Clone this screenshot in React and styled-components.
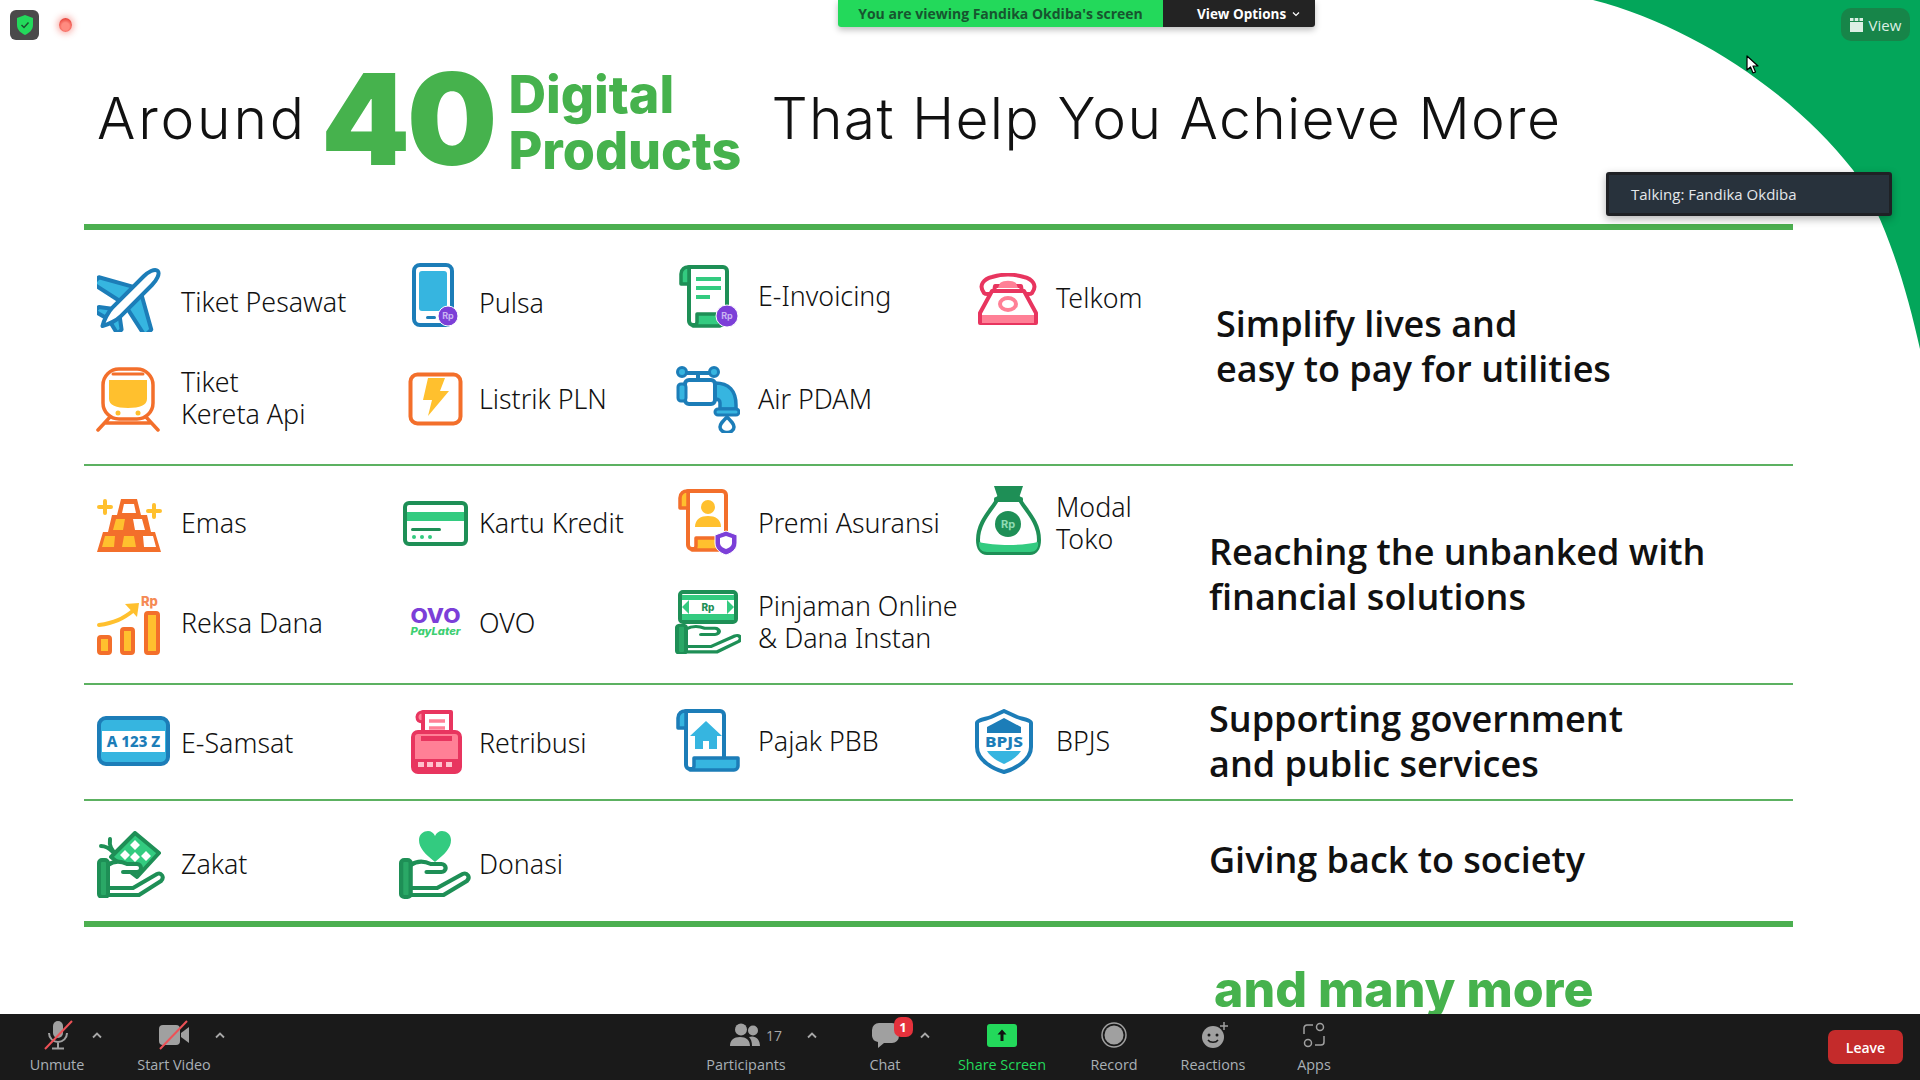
import styled, { createGlobalStyle } from "styled-components";

const BLUE = "#1c7db8";
const SKY = "#36b5e0";
const ORANGE = "#f36f2b";
const YELLOW = "#ffc02e";
const GREEN = "#1e8f56";
const MINT = "#33cb80";
const RED = "#e8355f";
const PINK = "#ff8096";
const PURPLE = "#7c3fd8";

const GlobalStyle = createGlobalStyle`
  html, body { margin: 0; padding: 0; background: #fff; }
  body { width: 1920px; height: 1080px; overflow: hidden; font-family: "Open Sans", sans-serif; }
`;

const Page = styled.div`
  position: relative;
  width: 1920px;
  height: 1080px;
  overflow: hidden;
  background: #fff;
`;

const Slide = styled.main`
  height: 1014px;
  display: flex;
  flex-direction: column;
`;

const Corner = styled.svg`
  position: absolute;
  top: 0;
  left: 0;
  pointer-events: none;
`;

const Header = styled.header`
  position: relative;
  height: 224px;
  padding: 22px 0 0 97px;
  box-sizing: border-box;
  display: flex;
  align-items: center;
  font-family: Inter, sans-serif;
`;

const Thin = styled.span`
  font-size: 57px;
  font-weight: 300;
  color: #111;
  letter-spacing: ${({ $ls }) => $ls}px;
  line-height: 64px;
  margin-top: -8px;
`;

const Big = styled.span`
  font-size: 127px;
  font-weight: 900;
  color: #46b24d;
  letter-spacing: -3px;
  line-height: 124px;
  margin: -8px 0 0 14px;
`;

const Stacked = styled.span`
  font-size: 52px;
  font-weight: 800;
  color: #46b24d;
  line-height: 56px;
  margin: 0 30px 0 14px;
`;

const Rule = styled.div`
  flex: none;
  width: 1709px;
  margin-left: 84px;
  height: ${({ $h }) => $h}px;
  background: ${({ $h }) => ($h > 3 ? "#4caf50" : "#5cb161")};
  position: relative;
`;

const Section = styled.section`
  flex: none;
  height: ${({ $h }) => $h}px;
  display: flex;
  padding-left: 96px;
  box-sizing: border-box;
`;

const ItemGrid = styled.div`
  width: 1113px;
  flex: none;
  box-sizing: border-box;
  padding-top: ${({ $top }) => $top}px;
  display: grid;
  grid-template-columns: 298px 279px 298px 238px;
  grid-auto-rows: ${({ $row }) => $row || 100}px;
  align-content: start;
`;

const Item = styled.div`
  display: flex;
  align-items: center;
  grid-row: ${({ $r }) => $r};
  grid-column: ${({ $c }) => $c};
`;

const IconSlot = styled.div`
  width: 85px;
  flex: none;
  display: flex;
  align-items: center;
  padding-left: ${({ $x }) => $x}px;
  box-sizing: border-box;
  margin-top: ${({ $iy }) => $iy * 2}px;
  svg { display: block; flex: none; }
`;

const Label = styled.div`
  font-family: "Noto Sans", sans-serif;
  font-size: 26.8px;
  font-weight: 300;
  line-height: 32px;
  color: #111;
  white-space: pre-line;
  margin-top: ${({ $y }) => $y * 2}px;
`;

const Tagline = styled.h2`
  margin: ${({ $top }) => $top}px 0 0 ${({ $x }) => $x}px;
  font-family: "Open Sans", sans-serif;
  font-size: 36px;
  font-weight: 600;
  line-height: 45px;
  color: #111;
  white-space: pre-line;
  align-self: flex-start;
`;

const More = styled.div`
  flex: none;
  height: 87px;
  box-sizing: border-box;
  padding: 36px 0 0 1214px;
  font-family: Inter, sans-serif;
  font-size: 50px;
  font-weight: 800;
  line-height: 52px;
  color: #46b24d;
  overflow: hidden;
  white-space: nowrap;
`;

const Shield = styled.div`
  position: absolute;
  left: 10px;
  top: 10px;
  width: 29px;
  height: 30px;
  border-radius: 6px;
  background: #4a4a4a;
  display: flex;
  align-items: center;
  justify-content: center;
`;

const RecDot = styled.div`
  position: absolute;
  left: 59px;
  top: 18px;
  width: 13px;
  height: 14px;
  border-radius: 50%;
  background: radial-gradient(circle at 50% 60%, #ff8b80 0 35%, #e8453c 75%);
  box-shadow: 0 0 6px 2px rgba(240, 90, 80, 0.45);
`;

const Banner = styled.div`
  position: absolute;
  top: 0;
  left: 838px;
  height: 27px;
  display: flex;
  font-size: 14px;
  font-weight: 700;
  box-shadow: 0 3px 6px rgba(0, 0, 0, 0.25);
  border-radius: 0 0 3px 3px;
  overflow: hidden;
`;

const BannerText = styled.div`
  width: 325px;
  background: #23d95b;
  color: #17552f;
  display: flex;
  align-items: center;
  justify-content: center;
`;

const BannerOptions = styled.div`
  width: 152px;
  background: #232323;
  color: #fff;
  display: flex;
  align-items: center;
  padding-left: 34px;
  box-sizing: border-box;
  gap: 6px;
  font-size: 13.5px;
`;

const ViewPill = styled.div`
  position: absolute;
  left: 1841px;
  top: 8px;
  width: 69px;
  height: 33px;
  border-radius: 10px;
  background: #178549;
  color: #dcefe4;
  font-size: 15px;
  display: flex;
  align-items: center;
  justify-content: center;
  gap: 6px;
`;

const Talking = styled.div`
  position: absolute;
  left: 1606px;
  top: 172px;
  width: 286px;
  height: 44px;
  box-sizing: border-box;
  background: #28323c;
  border: 3px solid #1f2125;
  border-radius: 3px;
  box-shadow: 0 3px 8px rgba(0, 0, 0, 0.3);
  color: #e4e7ea;
  font-size: 15px;
  display: flex;
  align-items: center;
  padding-left: 22px;
`;

const Cursor = styled.svg`
  position: absolute;
  left: 1746px;
  top: 55px;
`;

const Toolbar = styled.footer`
  height: 66px;
  background: #1a1a1a;
  display: flex;
  align-items: flex-start;
  font-family: "Open Sans", sans-serif;
`;

const ToolButton = styled.div`
  flex: none;
  width: ${({ $w }) => $w}px;
  margin-left: ${({ $ml }) => $ml || 0}px;
  display: flex;
  flex-direction: column;
  align-items: center;
  position: relative;
`;

const ToolIcon = styled.div`
  height: 42px;
  display: flex;
  align-items: center;
  justify-content: center;
  gap: 6px;
  position: relative;
  color: #a8a8a8;
  font-size: 14px;
  padding-left: ${({ $pad }) => $pad || 0}px;
`;

const ToolLabel = styled.div`
  font-size: 14.4px;
  line-height: 18px;
  white-space: nowrap;
  color: ${({ $on }) => ($on ? "#23d95b" : "#a9b0b6")};
`;

const Caret = styled.svg`
  flex: none;
  width: 20px;
  height: 10px;
  margin: 16px 0 0 ${({ $ml }) => $ml || 0}px;
`;

const Badge = styled.span`
  position: absolute;
  top: 3px;
  left: 22px;
  width: 19px;
  height: 20px;
  border-radius: 7px;
  background: #e5323c;
  color: #fff;
  font-size: 13px;
  font-weight: 700;
  display: flex;
  align-items: center;
  justify-content: center;
`;

const ShareTile = styled.div`
  width: 30px;
  height: 23px;
  border-radius: 3px;
  background: #23d95b;
  display: flex;
  align-items: center;
  justify-content: center;
`;

const Leave = styled.div`
  margin: 16px 17px 0 auto;
  width: 75px;
  height: 34px;
  border-radius: 7px;
  background: #c42b2b;
  color: #fff;
  font-size: 14px;
  font-weight: 600;
  display: flex;
  align-items: center;
  justify-content: center;
`;

function RpBadge({ x, y, r = 9.5 }) {
  return (
    <g>
      <circle cx={x} cy={y} r={r} fill={PURPLE} stroke="#fff" strokeWidth="1" />
      <text x={x} y={y + 3.2} fontSize="9" fontWeight="700" fontFamily="Inter, sans-serif" fill="#c9b3f2" textAnchor="middle">Rp</text>
    </g>
  );
}

function HandShape({ y = 0, sy = 1 }) {
  return (
    <g transform={`translate(0 ${y}) scale(1 ${sy})`} fill="none" stroke={GREEN} strokeWidth="4" strokeLinejoin="round" strokeLinecap="round">
      <path d="M11 8C18 3 24 4 30 7H40a4 4 0 0 1 0 8H26" fill="#fff" />
      <path d="M11 31H36L60 17c4-2 8 3 4 7L42 38H11" fill="#fff" />
      <rect x="2" y="3" width="9" height="37" rx="3" fill="#2aa866" />
    </g>
  );
}

function ScrollDoc({ stroke, fill, wide }) {
  return (
    <g strokeLinejoin="round">
      <path d="M11 2H45a4 4 0 0 1 4 4V60H15a4 4 0 0 1-4-4Z" fill="#fff" stroke={stroke} strokeWidth="4" />
      <path d="M11 2a7 7 0 0 0-8 7v10h8Z" fill={fill} stroke={stroke} strokeWidth="3.5" />
      <path d={wide ? "M15 61a4 4 0 0 0 4-4V49H63V57a4 4 0 0 1-4 4Z" : "M15 61a4 4 0 0 0 4-4V49H42V61Z"} fill={fill} stroke={stroke} strokeWidth="3.5" />
    </g>
  );
}

const Plane = () => (
  <svg width="64" height="65" viewBox="0 0 64 65">
    <g transform="rotate(45 32 32.5)" stroke={BLUE} strokeWidth="4" strokeLinejoin="round">
      <path d="M27 20-5 38v9l32-7ZM37 20l32 18v9l-32-7Z" fill={SKY} />
      <path d="M28 50 16 59v6l12-3ZM36 50l12 9v6l-12-3Z" fill={SKY} />
      <path d="M32-8c4 0 6 8 6 14v44c0 6-3 15-6 20-3-5-6-14-6-20V6c0-6 2-14 6-14Z" fill="#fff" />
    </g>
  </svg>
);

const Phone = () => (
  <svg width="47" height="64" viewBox="0 0 47 64">
    <rect x="2" y="2" width="38" height="60" rx="6" fill="#fff" stroke={BLUE} strokeWidth="4" />
    <rect x="7" y="8" width="28" height="40" rx="3" fill={SKY} />
    <rect x="14" y="53" width="10" height="3" rx="1.5" fill={BLUE} />
    <RpBadge x={36} y={53} r={10} />
  </svg>
);

const Train = () => (
  <svg width="64" height="65" viewBox="0 0 64 65" fill="none" stroke={ORANGE} strokeWidth="3.5" strokeLinecap="round" strokeLinejoin="round">
    <rect x="7" y="2" width="50" height="50" rx="16" fill="#fff" />
    <path d="M17 7H47" strokeWidth="3" />
    <path d="M13 13H51V32C51 38 44 41 32 41S13 38 13 32Z" fill={YELLOW} stroke="none" />
    <circle cx="22" cy="46" r="2.5" fill={YELLOW} stroke="none" />
    <circle cx="42" cy="46" r="2.5" fill={YELLOW} stroke="none" />
    <path d="M14 50 2 63M50 50l12 13M10 56H54" />
  </svg>
);

const Bolt = () => (
  <svg width="55" height="54" viewBox="0 0 55 54">
    <rect x="2.5" y="2.5" width="50" height="49" rx="7" fill="#fff" stroke={ORANGE} strokeWidth="4" />
    <path d="M20 6H37L32 19H41L20 44 24 28H15Z" fill={YELLOW} />
  </svg>
);

const Gold = () => (
  <svg width="66" height="55" viewBox="0 0 66 55">
    <path d="M25 1H41L45 17H51L55 34H59L65 54H1L7 34H12L16 17H21Z" fill={ORANGE} />
    <path d="M28 6H38L40 15H26Z" fill="#fff" />
    <path d="M20 21H29L27 32H17Z" fill={YELLOW} />
    <path d="M37 21H46L49 32H39Z" fill="#fff" />
    <path d="M9 38H19L18 49H6ZM28 38H38L40 49H26Z" fill={YELLOW} />
    <path d="M47 38H57L60 49H48Z" fill="#fff" />
    <path d="M9 3V15M3 9H15M58 7V19M52 13H64" stroke={YELLOW} strokeWidth="4" strokeLinecap="round" />
  </svg>
);

const Card = () => (
  <svg width="65" height="45" viewBox="0 0 65 45">
    <rect x="2" y="2" width="61" height="41" rx="4" fill="#fff" stroke={GREEN} strokeWidth="4" />
    <rect x="4" y="11" width="57" height="9" fill={MINT} />
    <rect x="8" y="27" width="30" height="3" rx="1.5" fill={GREEN} />
    <g fill={MINT}><circle cx="11" cy="36" r="2" /><circle cx="19" cy="36" r="2" /><circle cx="27" cy="36" r="2" /></g>
  </svg>
);

const Growth = () => (
  <svg width="66" height="62" viewBox="0 0 66 62">
    <text x="45" y="13" fontSize="13" fontWeight="800" fontFamily="Inter, sans-serif" fill="#f58a55">Rp</text>
    <g fill={YELLOW} stroke={ORANGE} strokeWidth="4" strokeLinejoin="round">
      <rect x="3" y="44" width="11" height="16" rx="2" />
      <rect x="26" y="36" width="11" height="24" rx="2" />
      <rect x="50" y="20" width="12" height="40" rx="2" />
    </g>
    <path d="M3 32C18 30 27 26 38 17" fill="none" stroke={YELLOW} strokeWidth="4" strokeLinecap="round" />
    <path d="M29 11 43 10 41 24Z" fill={YELLOW} />
  </svg>
);

const Ovo = () => (
  <svg width="53" height="36" viewBox="0 0 53 36" fontFamily="Inter, sans-serif">
    <text x="26.5" y="20" fontSize="20" fontWeight="800" fill={PURPLE} textAnchor="middle" textLength="50" lengthAdjust="spacingAndGlyphs">OVO</text>
    <text x="26.5" y="32" fontSize="11" fontWeight="800" fontStyle="italic" fill="#3ecf72" textAnchor="middle" textLength="50" lengthAdjust="spacingAndGlyphs">PayLater</text>
  </svg>
);

const Invoice = () => (
  <svg width="62" height="64" viewBox="0 0 62 64">
    <ScrollDoc stroke={GREEN} fill={MINT} />
    <path d="M18 14H43M18 23H43M18 32H32" stroke={MINT} strokeWidth="4" fill="none" />
    <RpBadge x={49} y={51} r={11} />
  </svg>
);

const Telephone = () => (
  <svg width="64" height="52" viewBox="0 0 64 52" strokeLinejoin="round">
    <path d="M8 20C2 12 8 6 16 4 26 1 38 1 48 4c8 2 14 8 8 16-2 2-9 1-10-1l-1-6H19l-1 6c-1 2-8 3-10 1Z" fill="#fff" stroke={RED} strokeWidth="4" />
    <path d="M16 18H48L60 40V50H4V40Z" fill="#fff" stroke={RED} strokeWidth="4" />
    <path d="M6 42H58V50H6Z" fill={PINK} />
    <path d="M24 10C28 7 36 7 40 10L42 15H22Z" fill={PINK} />
    <ellipse cx="32" cy="31" rx="8" ry="6" fill="#fff" stroke={PINK} strokeWidth="4" />
  </svg>
);

const Tap = () => (
  <svg width="64" height="68" viewBox="0 0 64 68" strokeLinejoin="round">
    <path d="M10 8H34M22 8V16" stroke={BLUE} strokeWidth="4" fill="none" />
    <circle cx="6" cy="7" r="4.5" fill={SKY} stroke={BLUE} strokeWidth="3" />
    <circle cx="38" cy="7" r="4.5" fill={SKY} stroke={BLUE} strokeWidth="3" />
    <path d="M39 18c14 0 21 8 21 22v4H44v-6c0-3-2-4-5-4Z" fill={SKY} stroke={BLUE} strokeWidth="3.5" />
    <rect x="9" y="15" width="30" height="24" rx="4" fill="#fff" stroke={BLUE} strokeWidth="4" />
    <rect x="2" y="19" width="8" height="17" rx="3" fill={SKY} stroke={BLUE} strokeWidth="3" />
    <rect x="39" y="44" width="24" height="6" rx="3" fill={SKY} stroke={BLUE} strokeWidth="3" />
    <path d="M51 52c5 5 7 7 7 10a7 5.500 0 0 1-14 0c0-3 2-5 7-10Z" fill="#fff" stroke={BLUE} strokeWidth="3.5" />
  </svg>
);

const Policy = () => (
  <svg width="62" height="66" viewBox="0 0 62 66">
    <ScrollDoc stroke={ORANGE} fill={YELLOW} />
    <circle cx="31" cy="18" r="7" fill={YELLOW} />
    <path d="M18 38c0-8 6-11 13-11s13 3 13 11Z" fill={YELLOW} />
    <path d="M49 42l11 4v8c0 6-5 10-11 12-6-2-11-6-11-12v-8Z" fill={PURPLE} stroke="#fff" strokeWidth="1" />
    <path d="M49 47l6 2v5c0 3-3 5-6 6-3-1-6-3-6-6v-5Z" fill="#fff" />
  </svg>
);

const MoneyBag = () => (
  <svg width="65" height="71" viewBox="0 0 65 71">
    <path d="M22 14 18 2H47L43 14Z" fill={GREEN} />
    <path d="M22 14H43C47 24 63 36 63 56c0 9-4 13-9 13H11c-5 0-9-4-9-13C2 36 18 24 22 14Z" fill="#fff" stroke={GREEN} strokeWidth="4" strokeLinejoin="round" />
    <rect x="18" y="13" width="29" height="5" rx="2" fill={GREEN} />
    <path d="M3 58c15 4 44 4 59 0 1 7-3 10-8 10H11c-5 0-9-3-8-10Z" fill={MINT} />
    <circle cx="32" cy="40" r="13" fill={GREEN} />
    <text x="32" y="44" fontSize="11" fontWeight="700" fontFamily="Inter, sans-serif" fill="#8fdcb4" textAnchor="middle">Rp</text>
  </svg>
);

const Loan = () => (
  <svg width="66" height="64" viewBox="0 0 66 64">
    <rect x="5" y="2" width="56" height="30" rx="3" fill="#fff" stroke={GREEN} strokeWidth="4" />
    <path d="M7 17 14 10V24ZM59 17l-7-7V24Z" fill={MINT} />
    <path d="M7 5H59V10H7ZM7 24H59V30H7Z" fill={MINT} />
    <text x="33" y="21" fontSize="10" fontWeight="800" fontFamily="Inter, sans-serif" fill={GREEN} textAnchor="middle">Rp</text>
    <HandShape y={33} sy={0.76} />
  </svg>
);

const Plate = () => (
  <svg width="73" height="50" viewBox="0 0 73 50">
    <rect x="2" y="2" width="69" height="46" rx="7" fill={SKY} stroke={BLUE} strokeWidth="4" />
    <rect x="5" y="15" width="63" height="21" fill="#fff" />
    <text x="36.500" y="31" fontSize="15" fontWeight="800" fontFamily="Noto Sans, sans-serif" fill={BLUE} textAnchor="middle">A 123 Z</text>
  </svg>
);

const Receipt = () => (
  <svg width="51" height="64" viewBox="0 0 51 64">
    <path d="M12 2H40V26H12Z" fill="#fff" stroke={RED} strokeWidth="4" strokeLinejoin="round" />
    <path d="M12 2a5 5 0 0 0-6 5c0 3 2 5 6 5Z" fill={PINK} stroke={RED} strokeWidth="3" />
    <path d="M18 11H34M18 18H34" stroke={PINK} strokeWidth="3.5" />
    <rect x="2" y="22" width="47" height="40" rx="5" fill={PINK} stroke={RED} strokeWidth="4" />
    <rect x="10" y="26" width="31" height="5" fill={RED} />
    <rect x="3" y="49" width="45" height="12" fill={RED} />
    <path d="M7 52h6v5H7ZM16 52h6v5h-6ZM25 52h6v5h-6ZM35 52h6v5h-6Z" fill="#ffc0cb" />
  </svg>
);

const PropertyTax = () => (
  <svg width="65" height="65" viewBox="0 0 65 65">
    <ScrollDoc stroke={BLUE} fill={SKY} wide />
    <path d="M31 12 47 27H42V40H34V32H28V40H20V27H15Z" fill={SKY} />
  </svg>
);

const BpjsShield = () => (
  <svg width="58" height="65" viewBox="0 0 58 65">
    <path d="M29 2 42 8C47 10 56 11 56 14V38C56 51 40 60 29 63 18 60 2 51 2 38V14C2 11 11 10 16 8Z" fill="#fff" stroke={BLUE} strokeWidth="4" strokeLinejoin="round" />
    <path d="M29 9 46 18V24H12V18Z" fill={BLUE} />
    <path d="M12 42H46C42 48 36 52 29 55 22 52 16 48 12 42Z" fill={SKY} />
    <text x="29" y="38" fontSize="14" fontWeight="800" fontFamily="Noto Sans, sans-serif" fill={BLUE} textAnchor="middle" textLength="38" lengthAdjust="spacingAndGlyphs">BPJS</text>
  </svg>
);

const Ketupat = () => (
  <svg width="68" height="67" viewBox="0 0 68 67">
    <path d="M13 8c-1 6 1 12 8 17M4 15c5 0 8 2 12 6" fill="none" stroke={GREEN} strokeWidth="4" strokeLinecap="round" />
    <path d="M38 2 62 22 40 46 14 26Z" fill={MINT} stroke={GREEN} strokeWidth="4" strokeLinejoin="round" />
    <g fill="#fff">
      <path d="M38 9l5 5-5 5-5-5ZM28 19l5 5-5 5-5-5ZM38 21l5 5-5 5-5-5ZM49 20l5 5-5 5-5-5ZM38 33l5 5-5 5-5-5Z" />
    </g>
    <HandShape y={26} />
  </svg>
);

const Heart = () => (
  <svg width="76" height="69" viewBox="0 0 76 69">
    <path d="M38 32C28 24 22 18 22 10 22 4 27 1 31 1c3 0 6 2 7 5 1-3 4-5 7-5 4 0 9 3 9 9 0 8-6 14-16 22Z" fill={MINT} />
    <g transform="translate(2 27) scale(1.06 1)"><HandShape /></g>
  </svg>
);

const GROUPS = [
  {
    h: 234, top: 20, tag: "Simplify lives and\neasy to pay for utilities", tagTop: 71, tagX: 7,
    items: [
      { r: 1, c: 1, text: "Tiket Pesawat", Icon: Plane, x: 1, y: 2, iy: -1 },
      { r: 1, c: 2, text: "Pulsa", Icon: Phone, x: 18, y: 3, iy: -5 },
      { r: 1, c: 3, text: "E-Invoicing", Icon: Invoice, x: 5, y: -4, iy: -3 },
      { r: 1, c: 4, text: "Telkom", Icon: Telephone, x: 5, y: -2, iy: -1 },
      { r: 2, c: 1, text: "Tiket\nKereta Api", Icon: Train, x: 0, y: -2, iy: -1 },
      { r: 2, c: 2, text: "Listrik PLN", Icon: Bolt, x: 14, y: -1, iy: -1 },
      { r: 2, c: 3, text: "Air PDAM", Icon: Tap, x: 3, y: -1, iy: -1 },
    ],
  },
  {
    h: 217, top: 7, tag: "Reaching the unbanked with\nfinancial solutions", tagTop: 63, tagX: 0,
    items: [
      { r: 1, c: 1, text: "Emas", Icon: Gold, x: 0, y: 0, iy: 2 },
      { r: 1, c: 2, text: "Kartu Kredit", Icon: Card, x: 9, y: 0, iy: 0 },
      { r: 1, c: 3, text: "Premi Asuransi", Icon: Policy, x: 4, y: 0, iy: -1 },
      { r: 1, c: 4, text: "Modal\nToko", Icon: MoneyBag, x: 5, y: 0, iy: -4 },
      { r: 2, c: 1, text: "Reksa Dana", Icon: Growth, x: 0, y: 0, iy: 1 },
      { r: 2, c: 2, text: "OVO", Icon: Ovo, x: 15, y: 0, iy: -2 },
      { r: 2, c: 3, text: "Pinjaman Online\n& Dana Instan", Icon: Loan, x: 2, y: -1, iy: -1 },
    ],
  },
  {
    h: 114, top: 8, tag: "Supporting government\nand public services", tagTop: 11, tagX: 0,
    items: [
      { r: 1, c: 1, text: "E-Samsat", Icon: Plate, x: 1, y: 0, iy: -2 },
      { r: 1, c: 2, text: "Retribusi", Icon: Receipt, x: 17, y: 0, iy: -1 },
      { r: 1, c: 3, text: "Pajak PBB", Icon: PropertyTax, x: 2, y: -2, iy: -2 },
      { r: 1, c: 4, text: "BPJS", Icon: BpjsShield, x: 4, y: -2, iy: -2 },
    ],
  },
  {
    h: 120, top: 13, tag: "Giving back to society", tagTop: 36, tagX: 0,
    items: [
      { r: 1, c: 1, text: "Zakat", Icon: Ketupat, x: 1, y: 0, iy: 0 },
      { r: 1, c: 2, text: "Donasi", Icon: Heart, x: 3, y: 0, iy: 0 },
    ],
  },
];

const RULES = [2, 2, 2, 6];

const UpCaret = ({ ml }) => (
  <Caret $ml={ml} viewBox="0 0 20 10">
    <path d="M6 7.500 10 3.500 14 7.500" fill="none" stroke="#a8a8a8" strokeWidth="1.800" />
  </Caret>
);

const Slash = () => (
  <path d="M2 29 29 1" stroke="#ed5157" strokeWidth="2" />
);

export default function App() {
  return (
    <Page>
      <GlobalStyle />
      <Corner width="1920" height="360" viewBox="0 0 1920 360">
        <path d="M1593 0C1690 25 1790 90 1853 170 1885 215 1907 290 1920 349V0Z" fill="#03a65a" />
      </Corner>

      <Slide>
        <Header>
          <Thin $ls={2.8}>Around</Thin>
          <Big>40</Big>
          <Stacked>Digital<br />Products</Stacked>
          <Thin $ls={1.3}>That Help You Achieve More</Thin>
        </Header>
        <Rule $h={6} />
        {GROUPS.map((group, i) => (
          <div key={group.tag}>
            <Section $h={group.h}>
              <ItemGrid $top={group.top}>
                {group.items.map(({ text, Icon, r, c, x, y, iy }) => (
                  <Item key={text} $r={r} $c={c}>
                    <IconSlot $x={x} $iy={iy}><Icon /></IconSlot>
                    <Label $y={y}>{text}</Label>
                  </Item>
                ))}
              </ItemGrid>
              <Tagline $top={group.tagTop} $x={group.tagX}>{group.tag}</Tagline>
            </Section>
            <Rule $h={RULES[i]} />
          </div>
        ))}
        <More>and many more</More>
      </Slide>

      <Toolbar>
        <ToolButton $w={60} $ml={27}>
          <ToolIcon $pad={2}>
            <svg width="30" height="30" viewBox="0 0 30 30">
              <rect x="10" y="1" width="10" height="17" rx="5" fill="#a0a0a0" />
              <path d="M6 13a9 9 0 0 0 18 0M15 22V28M9 28.500H21" fill="none" stroke="#a0a0a0" strokeWidth="2" />
              <Slash />
            </svg>
          </ToolIcon>
          <ToolLabel>Unmute</ToolLabel>
        </ToolButton>
        <UpCaret />
        <ToolButton $w={72} $ml={31}>
          <ToolIcon>
            <svg width="32" height="30" viewBox="0 0 32 30">
              <rect x="1" y="5" width="21" height="20" rx="4" fill="#a0a0a0" />
              <path d="M23 13 31 7V23L23 17Z" fill="#a0a0a0" />
              <Slash />
            </svg>
          </ToolIcon>
          <ToolLabel>Start Video</ToolLabel>
        </ToolButton>
        <UpCaret />

        <ToolButton $w={100} $ml={466}>
          <ToolIcon $pad={20}>
            <svg width="30" height="24" viewBox="0 0 30 24" fill="#a0a0a0">
              <circle cx="11" cy="6.500" r="6" />
              <circle cx="23" cy="7.500" r="5" />
              <path d="M0 23c0-6 4-9 10-9s10 3 10 9ZM22 23c0-4-1-7-3-9 6-2 11 2 11 9Z" />
            </svg>
            <span>17</span>
          </ToolIcon>
          <ToolLabel>Participants</ToolLabel>
        </ToolButton>
        <UpCaret ml={6} />
        <ToolButton $w={60} $ml={33}>
          <ToolIcon>
            <svg width="27" height="26" viewBox="0 0 27 26" fill="#a0a0a0">
              <path d="M7 1H20a7 7 0 0 1 7 7v6a7 7 0 0 1-7 7H12L6 26V20a7 7 0 0 1-6-6V8a7 7 0 0 1 7-7Z" />
            </svg>
            <Badge>1</Badge>
          </ToolIcon>
          <ToolLabel>Chat</ToolLabel>
        </ToolButton>
        <UpCaret />
        <ToolButton $w={100} $ml={17}>
          <ToolIcon>
            <ShareTile>
              <svg width="12" height="14" viewBox="0 0 12 14">
                <path d="M6 1.500 10.500 6.500H7.500V13H4.500V6.500H1.500Z" fill="#111" />
              </svg>
            </ShareTile>
          </ToolIcon>
          <ToolLabel $on>Share Screen</ToolLabel>
        </ToolButton>
        <ToolButton $w={80} $ml={22}>
          <ToolIcon>
            <svg width="26" height="26" viewBox="0 0 26 26">
              <circle cx="13" cy="13" r="12" fill="none" stroke="#a0a0a0" strokeWidth="1.500" />
              <circle cx="13" cy="13" r="9.500" fill="#a0a0a0" />
            </svg>
          </ToolIcon>
          <ToolLabel>Record</ToolLabel>
        </ToolButton>
        <ToolButton $w={80} $ml={19}>
          <ToolIcon $pad={4}>
            <svg width="28" height="28" viewBox="0 0 28 28">
              <circle cx="12" cy="16" r="11" fill="#a0a0a0" />
              <circle cx="8" cy="14" r="1.500" fill="#1a1a1a" />
              <circle cx="16" cy="14" r="1.500" fill="#1a1a1a" />
              <path d="M7 19c2 3 8 3 10 0" fill="none" stroke="#1a1a1a" strokeWidth="1.500" />
              <path d="M23 1V9M19 5H27" stroke="#a0a0a0" strokeWidth="1.500" />
            </svg>
          </ToolIcon>
          <ToolLabel>Reactions</ToolLabel>
        </ToolButton>
        <ToolButton $w={60} $ml={31}>
          <ToolIcon>
            <svg width="22" height="26" viewBox="0 0 22 26" fill="none" stroke="#a0a0a0" strokeWidth="1.500">
              <path d="M10 3H4a3 3 0 0 0-3 3V12M12 23H18a3 3 0 0 0 3-3V14" />
              <circle cx="17" cy="5" r="3.500" />
              <circle cx="5" cy="21" r="3.500" />
            </svg>
          </ToolIcon>
          <ToolLabel>Apps</ToolLabel>
        </ToolButton>
        <Leave>Leave</Leave>
      </Toolbar>

      <Shield>
        <svg width="18" height="22" viewBox="0 0 18 22">
          <path d="M9 1 17 4V11C17 16 13 19 9 21 5 19 1 16 1 11V4Z" fill="#23d95b" />
          <path d="M5.500 11 8 13.500 12.500 8.500" fill="none" stroke="#1c4f2e" strokeWidth="1.500" />
        </svg>
      </Shield>
      <RecDot />
      <Banner>
        <BannerText>You are viewing Fandika Okdiba's screen</BannerText>
        <BannerOptions>
          View Options
          <svg width="8" height="6" viewBox="0 0 8 6">
            <path d="M1 1.500 4 4.500 7 1.500" fill="none" stroke="#fff" strokeWidth="1.200" />
          </svg>
        </BannerOptions>
      </Banner>
      <ViewPill>
        <svg width="13" height="14" viewBox="0 0 13 14" fill="#dcefe4">
          <path d="M0 0H3.500V3H0ZM4.700 0H8.300V3H4.700ZM9.500 0H13V3H9.500ZM0 4H13V14H0Z" />
        </svg>
        View
      </ViewPill>
      <Talking>Talking: Fandika Okdiba</Talking>
      <Cursor width="13" height="20" viewBox="0 0 13 20">
        <path d="M1 1V15L4.500 12 7 18 9.500 17 7 11H12Z" fill="#fff" stroke="#000" strokeWidth="1.200" strokeLinejoin="round" />
      </Cursor>
    </Page>
  );
}
